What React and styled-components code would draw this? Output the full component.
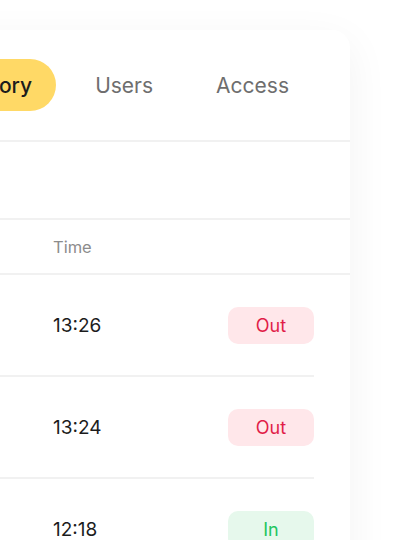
import React from "react";
import styled, { createGlobalStyle } from "styled-components";

const Global = createGlobalStyle`
  html, body {
    margin: 0;
    padding: 0;
    background: #ffffff;
    overflow: hidden;
    font-family: Inter, "Noto Sans", "Liberation Sans", sans-serif;
  }
`;

const Page = styled.div`
  width: 400px;
  height: 540px;
  overflow: hidden;
  padding-top: 30px;
  box-sizing: border-box;
`;

const Card = styled.section`
  margin-left: -247px;
  width: 597px;
  background: #ffffff;
  border-radius: 18px;
  box-shadow: 0 12px 44px rgba(0, 0, 0, 0.055);
`;

const TabBar = styled.nav`
  display: flex;
  justify-content: flex-end;
  align-items: center;
  gap: 15px;
  height: 110px;
  padding-right: 37px;
  border-bottom: 2px solid #f1f1f1;
`;

const Tab = styled.button`
  height: 52px;
  padding: 0 24px;
  border: none;
  border-radius: 26px;
  font-family: inherit;
  font-size: 21px;
  font-weight: ${(p) => (p.$active ? 500 : 400)};
  color: ${(p) => (p.$active ? "#1c1c1c" : "#6e6e6e")};
  background: ${(p) => (p.$active ? "#ffd966" : "transparent")};
  cursor: pointer;
`;

const Toolbar = styled.div`
  height: 76px;
  display: flex;
  align-items: center;
  padding: 0 36px;
  border-bottom: 2px solid #f1f1f1;
`;

const Caption = styled.span`
  font-size: 17px;
  color: #222;
`;

const Grid = `
  display: grid;
  grid-template-columns: 140px 124px 1fr 86px;
  align-items: center;
`;

const HeadRow = styled.div`
  ${Grid}
  height: 53px;
  padding: 0 36px;
  border-bottom: 2px solid #f1f1f1;
`;

const HeadCell = styled.span`
  font-size: 16.5px;
  color: #8c8c8c;
`;

const Row = styled.div`
  ${Grid}
  height: 100px;
  margin: 0 36px;
  border-bottom: 2px solid #f1f1f1;
`;

const Cell = styled.span`
  font-size: 19px;
  color: #1c1c1c;
`;

const Badge = styled.span`
  height: 37px;
  border-radius: 10px;
  display: flex;
  align-items: center;
  justify-content: center;
  font-size: 18px;
  background: ${(p) => (p.$in ? "#e6f8ec" : "#ffe7ea")};
  color: ${(p) => (p.$in ? "#22c55e" : "#e11d48")};
`;

const rows = [
  { user: "Anna K.", date: "Today", time: "13:26", dir: "out" },
  { user: "Mark D.", date: "Today", time: "13:24", dir: "out" },
  { user: "Lena P.", date: "Today", time: "12:18", dir: "in" },
  { user: "Omar S.", date: "Today", time: "11:02", dir: "in" },
];

export default function App() {
  return (
    <>
      <Global />
      <Page>
        <Card>
          <TabBar>
            <Tab $active>History</Tab>
            <Tab>Users</Tab>
            <Tab>Access</Tab>
          </TabBar>
          <Toolbar>
            <Caption>Today</Caption>
          </Toolbar>
          <HeadRow>
            <HeadCell>User</HeadCell>
            <HeadCell>Date</HeadCell>
            <HeadCell>Time</HeadCell>
            <HeadCell />
          </HeadRow>
          {rows.map((r) => (
            <Row key={r.time}>
              <Cell>{r.user}</Cell>
              <Cell>{r.date}</Cell>
              <Cell>{r.time}</Cell>
              <Badge $in={r.dir === "in"}>{r.dir === "in" ? "In" : "Out"}</Badge>
            </Row>
          ))}
        </Card>
      </Page>
    </>
  );
}
